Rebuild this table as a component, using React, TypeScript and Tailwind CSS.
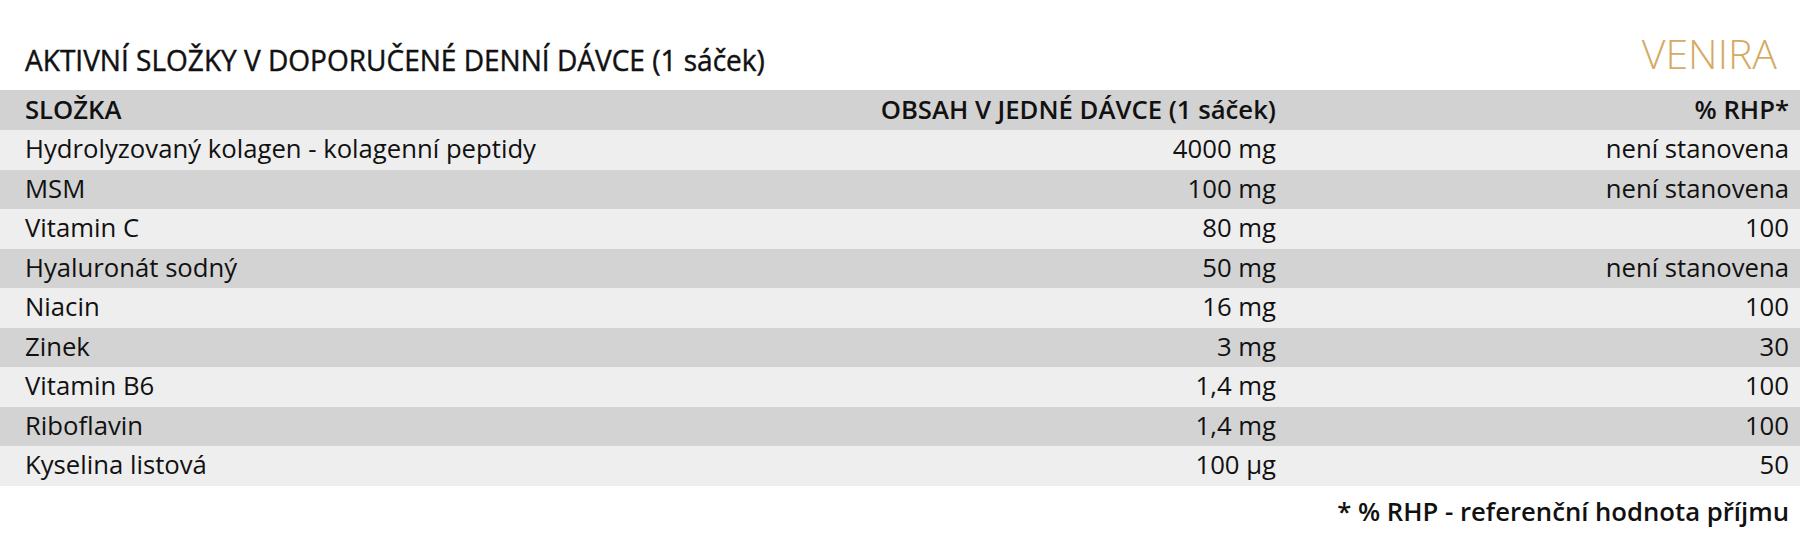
import React from "react";

const rows: [string, string, string][] = [
  ["Hydrolyzovaný kolagen - kolagenní peptidy", "4000 mg", "není stanovena"],
  ["MSM", "100 mg", "není stanovena"],
  ["Vitamin C", "80 mg", "100"],
  ["Hyaluronát sodný", "50 mg", "není stanovena"],
  ["Niacin", "16 mg", "100"],
  ["Zinek", "3 mg", "30"],
  ["Vitamin B6", "1,4 mg", "100"],
  ["Riboflavin", "1,4 mg", "100"],
  ["Kyselina listová", "100 µg", "50"],
];

export default function App() {
  return (
    <div
      className="w-[1800px] h-[552px] bg-white text-[#111]"
      style={{ fontFamily: '"Open Sans", "DejaVu Sans", sans-serif' }}
    >
      <div className="flex items-end justify-between h-[90px] pl-[25px] pr-[23px] pb-[14px]">
        <h1 className="text-[29.5px] leading-none font-medium whitespace-nowrap origin-left scale-x-[0.95] pb-[2px] [-webkit-text-stroke:0.45px_#111]">
          AKTIVNÍ SLOŽKY V DOPORUČENÉ DENNÍ DÁVCE (1 sáček)
        </h1>
        <div className="text-[41px] leading-none font-light text-[#d4ab63] mb-[2px]">
          VENIRA
        </div>
      </div>
      <div className="flex items-center h-[40px] bg-[#d2d2d2] pl-[25px] pr-[11px] text-[25.7px] font-semibold">
        <div className="flex-1">SLOŽKA</div>
        <div className="text-right">OBSAH V JEDNÉ DÁVCE (1 sáček)</div>
        <div className="w-[513px] text-right">% RHP*</div>
      </div>
      {rows.map((r, i) => (
        <div
          key={i}
          className={
            "flex items-center h-[39.5px] pl-[25px] pr-[11px] text-[25.7px] " +
            (i % 2 === 0 ? "bg-[#eeeeee]" : "bg-[#d3d3d3]")
          }
        >
          <div className="flex-1">{r[0]}</div>
          <div className="text-right">{r[1]}</div>
          <div className="w-[513px] text-right">{r[2]}</div>
        </div>
      ))}
      <div className="flex justify-end pr-[11px] pt-[7px] text-[25.7px] font-semibold">
        * % RHP - referenční hodnota příjmu
      </div>
    </div>
  );
}
